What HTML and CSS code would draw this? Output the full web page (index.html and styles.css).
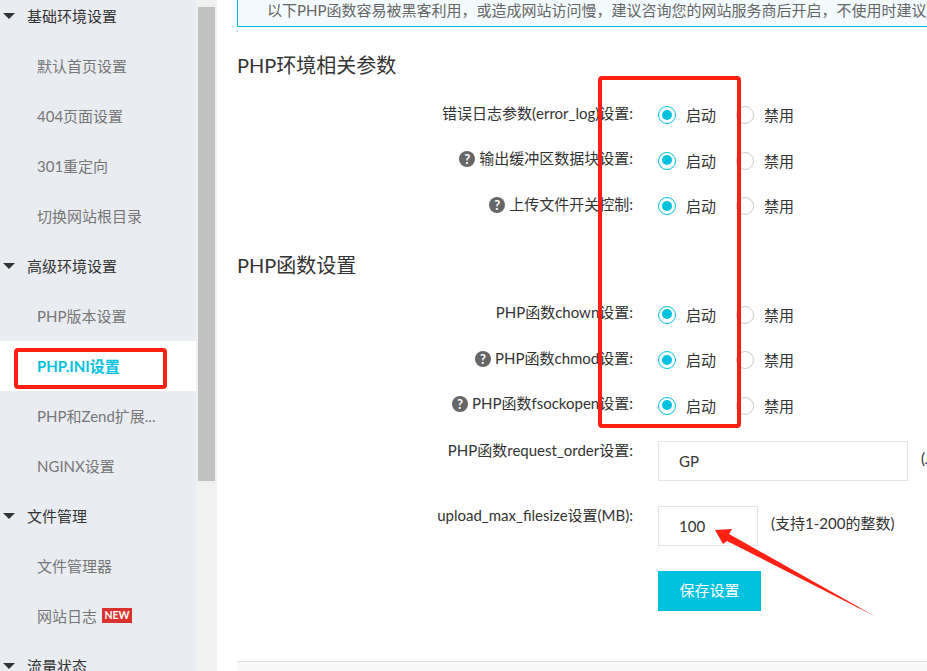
FILE: index.html
```html
<!DOCTYPE html>
<html lang="zh-CN">
<head>
<meta charset="utf-8">
<title>PHP.INI设置</title>
<link rel="stylesheet" href="styles.css">
</head>
<body>
<div class="page">
  <aside class="sidebar">
    <nav class="menu">
      <div class="group"><i class="caret"></i>基础环境设置</div>
      <div class="item">默认首页设置</div>
      <div class="item">404页面设置</div>
      <div class="item">301重定向</div>
      <div class="item">切换网站根目录</div>
      <div class="group"><i class="caret"></i>高级环境设置</div>
      <div class="item">PHP版本设置</div>
      <div class="item active">PHP.INI设置</div>
      <div class="item">PHP和Zend扩展...</div>
      <div class="item">NGINX设置</div>
      <div class="group"><i class="caret"></i>文件管理</div>
      <div class="item">文件管理器</div>
      <div class="item">网站日志<span class="badge">NEW</span></div>
      <div class="group"><i class="caret"></i>流量状态</div>
    </nav>
    <div class="scrollbar"><div class="thumb"></div></div>
  </aside>
  <main class="main">
    <div class="notice">以下PHP函数容易被黑客利用，或造成网站访问慢，建议咨询您的网站服务商后开启，不使用时建议关闭。</div>

    <h2 class="title first">PHP环境相关参数</h2>
    <div class="rows">
      <div class="row"><label class="label">错误日志参数(error_log)设置:</label><span class="radio on"></span><span class="opt">启动</span><span class="radio"></span><span class="opt">禁用</span></div>
      <div class="row"><label class="label"><i class="help">?</i>输出缓冲区数据块设置:</label><span class="radio on"></span><span class="opt">启动</span><span class="radio"></span><span class="opt">禁用</span></div>
      <div class="row"><label class="label"><i class="help">?</i>上传文件开关控制:</label><span class="radio on"></span><span class="opt">启动</span><span class="radio"></span><span class="opt">禁用</span></div>
    </div>

    <h2 class="title">PHP函数设置</h2>
    <div class="rows">
      <div class="row"><label class="label">PHP函数chown设置:</label><span class="radio on"></span><span class="opt">启动</span><span class="radio"></span><span class="opt">禁用</span></div>
      <div class="row"><label class="label"><i class="help">?</i>PHP函数chmod设置:</label><span class="radio on"></span><span class="opt">启动</span><span class="radio"></span><span class="opt">禁用</span></div>
      <div class="row"><label class="label"><i class="help">?</i>PHP函数fsockopen设置:</label><span class="radio on"></span><span class="opt">启动</span><span class="radio"></span><span class="opt">禁用</span></div>
    </div>

    <div class="field first-field">
      <label class="label top">PHP函数request_order设置:</label>
      <div class="input wide">GP</div>
      <span class="hint">(J</span>
    </div>
    <div class="field">
      <label class="label top">upload_max_filesize设置(MB):</label>
      <div class="input narrow">100</div>
      <span class="hint">(支持1-200的整数)</span>
    </div>
    <div class="actions"><button class="save" type="button">保存设置</button></div>
    <div class="footer"></div>
  </main>

  <div class="mark mark-columns"></div>
  <div class="mark mark-menu"></div>
  <svg class="arrow" width="927" height="671" viewBox="0 0 927 671" aria-hidden="true">
    <defs>
      <linearGradient id="fade" gradientUnits="userSpaceOnUse" x1="715" y1="530" x2="878" y2="618">
        <stop offset="0" stop-color="#ff2014"/>
        <stop offset="0.88" stop-color="#ff2014"/>
        <stop offset="1" stop-color="#ff2014" stop-opacity="0.15"/>
      </linearGradient>
    </defs>
    <polygon fill="url(#fade)" points="715,530 732,529 729,534 879,618.5 727,541 723,544"/>
  </svg>
</div>
</body>
</html>
```

FILE: styles.css
```css
* { box-sizing: border-box; }
html, body { margin: 0; padding: 0; height: 100%; overflow: hidden; background: #fff; }
body {
  font-family: Lato, "Noto Sans CJK SC", "Liberation Sans", sans-serif;
  font-size: 15px;
  color: #333;
}
.page { position: relative; display: flex; width: 927px; height: 671px; overflow: hidden; }

/* Sidebar */
.sidebar { display: flex; flex: 0 0 217px; height: 671px; overflow: hidden; background: #f1f1f1; }
.menu { flex: 0 0 196px; margin-top: -9px; height: 680px; background: #e9ecf1; }
.group, .item { display: flex; align-items: center; height: 50px; padding-bottom: 2px; white-space: nowrap; }
.group { padding-left: 27px; color: #333; position: relative; }
.caret {
  position: absolute; left: 3px; top: 22px;
  border-style: solid; border-width: 6px 6.5px 0; border-color: #333 transparent transparent;
}
.item { padding-left: 37px; color: #777; }
.item.active { background: #fff; color: #00c1de; font-weight: 700; }
.badge {
  display: inline-block; margin: 0 0 -1px 5px; width: 30px; height: 15px;
  background: #d9322e; color: #fff; font-size: 10.5px; font-weight: 700; line-height: 15px; text-align: center;
}
.scrollbar { flex: 0 0 21px; padding: 7px 2px 0; }
.thumb { width: 17px; height: 474px; background: #c1c1c1; }

/* Main */
.main { flex: 1; min-width: 0; padding-left: 20px; overflow: hidden; }
.notice {
  margin-top: -13px; height: 40px; line-height: 30px; padding: 7px 0 0 29px;
  width: 720px;
  background: #f4fbfe; border: 1px solid #00c1de; border-right: 0;
  color: #666; white-space: nowrap; overflow: hidden;
}
.title { margin: 21px 0 0; height: 30px; line-height: 30px; font-size: 20px; font-weight: 400; color: #333; }
.title.first { margin-top: 23px; }
.rows { margin-top: 12.25px; }
.row { display: flex; align-items: center; height: 45.5px; }
.label {
  display: flex; justify-content: flex-end; align-items: center;
  flex: 0 0 396px; margin-top: -5px; white-space: nowrap; color: #333; line-height: 20px;
}
.label.top { margin-top: -1px; }
.help {
  display: inline-block; flex: none; width: 16px; height: 16px; margin: 2px 4px 0 0; border-radius: 50%;
  background: #666; color: #fff; font-size: 13px; font-weight: 700; font-style: normal; line-height: 16px; text-align: center;
}
.radio {
  flex: none; position: relative; width: 18px; height: 18px; margin-left: 25px;
  border: 1px solid #ccc; border-radius: 50%; background: #fff;
}
.radio.on { border: 1.5px solid #00c1de; }
.radio.on::after {
  content: ""; position: absolute; left: 2.5px; top: 2.5px; width: 10px; height: 10px;
  border-radius: 50%; background: #00c1de;
}
.opt { flex: 0 0 30px; margin: -1px 0 0 10px; color: #333; }
.opt + .radio { margin-left: 20px; }

.field { display: flex; align-items: flex-start; margin-top: 25px; }
.first-field { margin-top: 12.25px; }
.field .label { height: 20px; }
.input {
  flex: none; height: 40px; margin-left: 25px; padding-left: 20px; line-height: 38px;
  border: 1px solid #e5e5e5; background: #fff; color: #333;
}
.wide { width: 250px; }
.narrow { width: 100px; }
.hint { margin-left: 13px; line-height: 35px; color: #333; white-space: nowrap; }
.actions { margin: 25px 0 0 421px; }
.save {
  display: block; width: 103px; height: 40px; border: 0; padding: 0 0 2px;
  background: #00c1de; color: #fff; font: inherit;
}
.footer { margin-top: 50px; height: 20px; background: #f9f9f9; border-top: 1px solid #ddd; }

/* Hand-drawn red annotations on top of the screenshot */
.mark { position: absolute; border: 4px solid #ff2014; border-radius: 4px; pointer-events: none; }
.mark-columns { left: 598px; top: 76px; width: 143px; height: 352px; }
.mark-menu { left: 14px; top: 348px; width: 153px; height: 41px; }
.arrow { position: absolute; left: 0; top: 0; pointer-events: none; }
```
